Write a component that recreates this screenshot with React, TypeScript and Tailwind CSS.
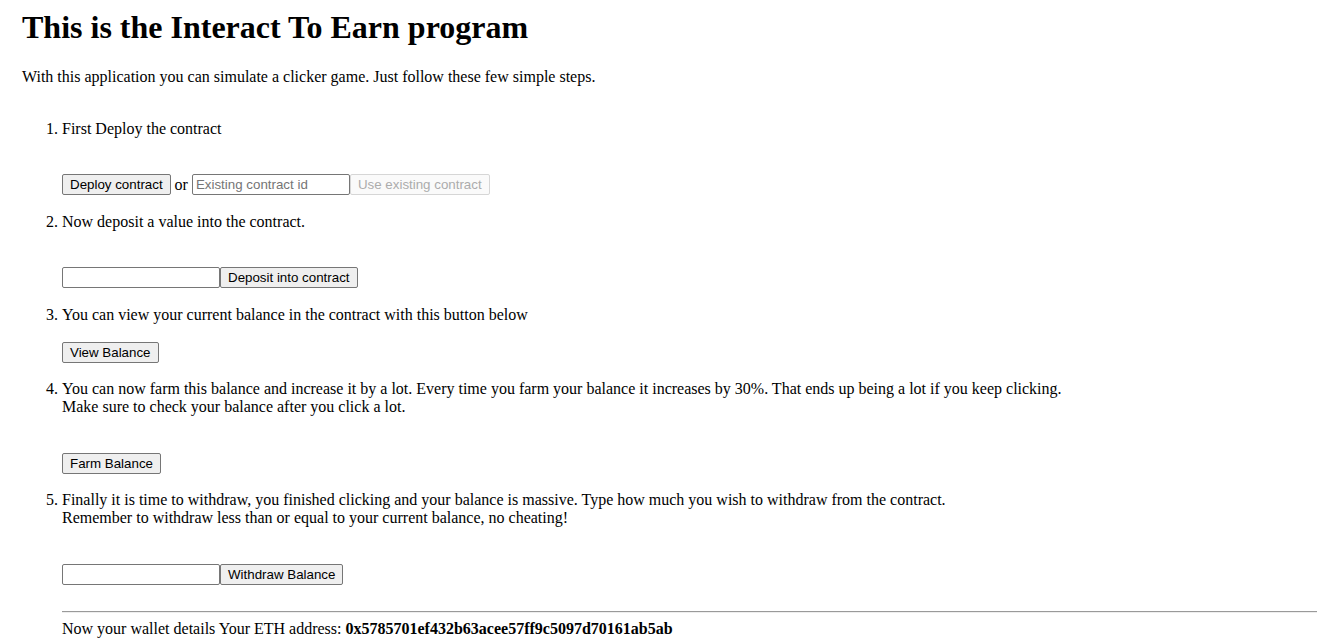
import React from "react";

const btn =
  "inline-flex items-center h-[21px] px-[7px] border border-[#767676] rounded-[2px] bg-[#efefef] text-[13.333px] text-black leading-none font-['Liberation_Sans',Arial,sans-serif] whitespace-nowrap";
const btnDisabled =
  "inline-flex items-center h-[21px] px-[7px] border border-[#d6d6d6] rounded-[2px] bg-[#fafafa] text-[13.333px] text-[#acacac] leading-none font-['Liberation_Sans',Arial,sans-serif] whitespace-nowrap";
const input =
  "w-[158px] h-[21px] border border-[#767676] rounded-[2px] px-[3px] text-[13.333px] text-black bg-white font-['Liberation_Sans',Arial,sans-serif] placeholder:text-[#757575] outline-none";

export default function App() {
  return (
    <div className="pt-[9px] pl-[22px] pr-2 font-['Liberation_Serif','Times_New_Roman',serif] text-base leading-[normal] text-black bg-white min-h-screen">
      <h1 className="text-[32px] font-bold leading-[normal] mb-[21.5px]">
        This is the Interact To Earn program
      </h1>
      <p>With this application you can simulate a clicker game. Just follow these few simple steps.</p>
      <ol className="list-decimal pl-10 mt-[34px]">
        <li className="mb-[17.3px]">
          <div>First Deploy the contract</div>
          <div className="mt-[36.8px] h-[21px] flex items-center">
            <button className={btn}>Deploy contract</button>
            <span className="mx-[4px]">or</span>
            <input className={input} placeholder="Existing contract id" />
            <button className={btnDisabled} disabled>
              Use existing contract
            </button>
          </div>
        </li>
        <li className="mb-[17.3px]">
          <div>Now deposit a value into the contract.</div>
          <div className="mt-[36.8px] h-[21px] flex items-center">
            <input className={input} />
            <button className={btn}>Deposit into contract</button>
          </div>
        </li>
        <li className="mb-[17.3px]">
          <div>You can view your current balance in the contract with this button below</div>
          <div className="mt-[18.4px] h-[21px] flex items-center">
            <button className={btn}>View Balance</button>
          </div>
        </li>
        <li className="mb-[17.3px]">
          <div>
            You can now farm this balance and increase it by a lot. Every time you farm your balance it increases by
            30%. That ends up being a lot if you keep clicking.
            <br />
            Make sure to check your balance after you click a lot.
          </div>
          <div className="mt-[36.8px] h-[21px] flex items-center">
            <button className={btn}>Farm Balance</button>
          </div>
        </li>
        <li>
          <div>
            Finally it is time to withdraw, you finished clicking and your balance is massive. Type how much you wish
            to withdraw from the contract.
            <br />
            Remember to withdraw less than or equal to your current balance, no cheating!
          </div>
          <div className="mt-[36.8px] h-[21px] flex items-center">
            <input className={input} />
            <button className={btn}>Withdraw Balance</button>
          </div>
        </li>
        <hr className="mt-[26px] mb-[7px] h-[2px] border-t border-t-[#9a9a9a] border-b border-b-[#eeeeee]" />
        <div>
          Now your wallet details Your ETH address: <b className="font-bold">0x5785701ef432b63acee57ff9c5097d70161ab5ab</b>
        </div>
      </ol>
    </div>
  );
}
